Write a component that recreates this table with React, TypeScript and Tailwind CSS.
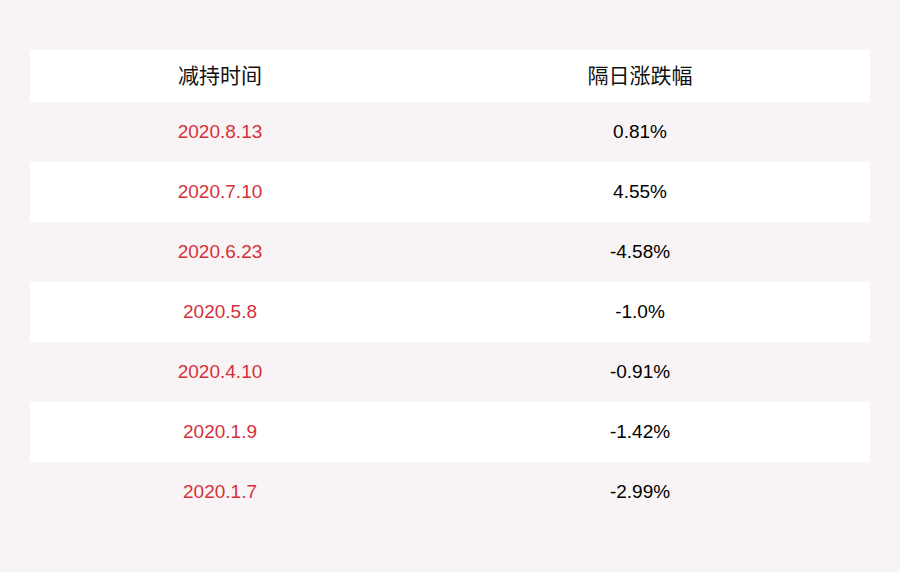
const rows = [
  { date: "2020.8.13", change: "0.81%" },
  { date: "2020.7.10", change: "4.55%" },
  { date: "2020.6.23", change: "-4.58%" },
  { date: "2020.5.8", change: "-1.0%" },
  { date: "2020.4.10", change: "-0.91%" },
  { date: "2020.1.9", change: "-1.42%" },
  { date: "2020.1.7", change: "-2.99%" },
];

export default function App() {
  return (
    <div className="w-[900px] h-[572px] bg-[#f8f4f5] pt-[50px] px-[30px] font-['Liberation_Sans','Noto_Sans_CJK_SC',sans-serif]">
      {/* Header */}
      <div className="flex h-[52px] items-center bg-white text-[21px] text-[#111]">
        <div className="w-[380px] text-center">减持时间</div>
        <div className="flex-1 text-center">隔日涨跌幅</div>
      </div>

      {rows.map((r, i) => (
        <div
          key={r.date}
          className={`flex h-[60px] items-center text-[19px] ${i % 2 === 1 ? "bg-white" : "bg-[#f8f4f5]"}`}
        >
          <div className="w-[380px] text-center text-[#d7303a]">{r.date}</div>
          <div className="flex-1 text-center text-black">{r.change}</div>
        </div>
      ))}
    </div>
  );
}
